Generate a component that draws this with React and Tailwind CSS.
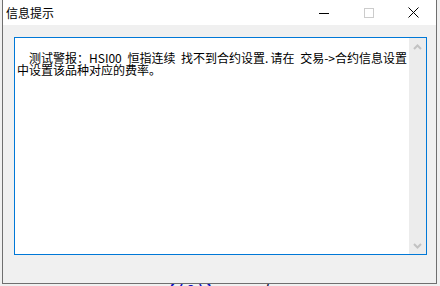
import React from "react";

// Win10-style message dialog, 440x286
function CaptionButton({ children }) {
  return (
    <div className="w-[45px] h-[25px] flex items-center justify-center">
      {children}
    </div>
  );
}

function Chevron({ up }) {
  return (
    <svg width="9" height="6" viewBox="0 0 9 6">
      <path
        d={up ? "M1 5 L4.5 1.5 L8 5" : "M1 1 L4.5 4.5 L8 1"}
        fill="none"
        stroke="#c2c2c2"
        strokeWidth="2"
      />
    </svg>
  );
}

export default function App() {
  return (
    <div className="w-[440px] h-[286px] bg-[#f0f0f0] overflow-hidden flex flex-col font-['Noto_Sans_CJK_SC','Noto_Sans',sans-serif]">
      <div className="flex pl-[2px]">
        <div className="w-[435px] h-[284px] border-l border-r border-b border-[#6f6f6f] flex flex-col">
          {/* Title bar */}
          <div className="h-[25px] bg-white flex items-center">
            <span className="pl-[3px] text-[12px] leading-none text-black flex-1">
              信息提示
            </span>
            <CaptionButton>
              <svg width="10" height="10" viewBox="0 0 10 10">
                <line x1="0" y1="5.5" x2="10" y2="5.5" stroke="#000" strokeWidth="1" />
              </svg>
            </CaptionButton>
            <CaptionButton>
              <svg width="10" height="10" viewBox="0 0 10 10">
                <rect x="0.5" y="0.5" width="9" height="9" fill="none" stroke="#cccccc" strokeWidth="1" />
              </svg>
            </CaptionButton>
            <CaptionButton>
              <svg width="11" height="11" viewBox="0 0 11 11">
                <path d="M0.5 0.5 L10.5 10.5 M10.5 0.5 L0.5 10.5" stroke="#000" strokeWidth="1" />
              </svg>
            </CaptionButton>
          </div>

          {/* Body */}
          <div className="flex-1 bg-[#f0f0f0] pt-[12px] pl-[11px] pr-[9px]">
            <div className="h-[218px] border border-[#0078d7] bg-white flex">
              <div className="flex-1 pt-[14px] pl-[2px] text-[12px] leading-[12px] text-black whitespace-pre">
                <div className="pl-[12px] [word-spacing:3px]">
                  测试警报：HSI00 恒指连续 找不到合约设置<span className="tracking-[2px]">.</span>请在 交易-&gt;合约信息设置
                </div>
                <div>中设置该品种对应的费率。</div>
              </div>
              <div className="w-[17px] bg-[#ececec] flex flex-col justify-between">
                <div className="h-[17px] flex items-center justify-center">
                  <Chevron up />
                </div>
                <div className="h-[17px] flex items-center justify-center">
                  <Chevron />
                </div>
              </div>
            </div>
          </div>
        </div>
      </div>

      {/* sliver of the window behind */}
      <div className="h-[2px] overflow-hidden flex items-start text-[15px] leading-[12px] font-bold">
        <span className="pl-[169px] tracking-[3px] text-[#1010c0]">{"{(0)}"}</span>
        <span className="pl-[48px] text-[#202040]">/</span>
      </div>
    </div>
  );
}
